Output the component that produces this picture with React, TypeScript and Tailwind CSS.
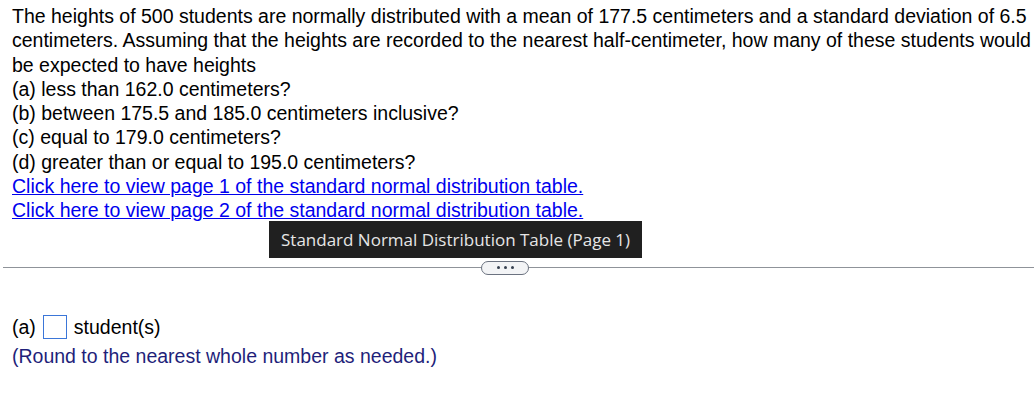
import React from 'react'

export default function App() {
  return (
    <div className="relative w-[1034px] h-[406px] bg-white overflow-hidden" style={{ fontFamily: '"Liberation Sans", Arial, sans-serif' }}>
      {/* question text */}
      <div className="pl-[12px] pt-[4px] text-[19.5px] leading-[24.3px] text-black">
        <p>
          The heights of 500 students are normally distributed with a mean of 177.5 centimeters and a standard deviation of 6.5
          centimeters. Assuming that the heights are recorded to the nearest half-centimeter, how many of these students would
          be expected to have heights
        </p>
        <p>(a) less than 162.0 centimeters?</p>
        <p>(b) between 175.5 and 185.0 centimeters inclusive?</p>
        <p>(c) equal to 179.0 centimeters?</p>
        <p>(d) greater than or equal to 195.0 centimeters?</p>
        <p><a href="#" className="text-[#0000ee] underline">Click here to view page 1 of the standard normal distribution table.</a></p>
        <p><a href="#" className="text-[#0000ee] underline">Click here to view page 2 of the standard normal distribution table.</a></p>
      </div>

      {/* divider with expand pill */}
      <div className="relative mt-[38px] ml-[3px] h-[14px] flex items-center">
        <div className="w-full h-px bg-[#8f9399]" />
        <div className="absolute left-[478px] top-0 w-[48px] h-[14px] rounded-full border border-[#6b7280] bg-[#f3f4f6] flex items-center justify-center gap-[4px]">
          <span className="w-[3px] h-[3px] rounded-full bg-[#374151]" />
          <span className="w-[3px] h-[3px] rounded-full bg-[#374151]" />
          <span className="w-[3px] h-[3px] rounded-full bg-[#374151]" />
        </div>
      </div>

      {/* answer */}
      <div className="pl-[12px] mt-[40px] text-[19.5px] leading-[24px]">
        <div className="flex items-center gap-[7px] text-black">
          <span>(a)</span>
          <span className="w-[24px] h-[24px] border border-[#3b76d8] bg-white" />
          <span>student(s)</span>
        </div>
        <p className="mt-[5px] text-[#1f1f7a]">(Round to the nearest whole number as needed.)</p>
      </div>

      {/* tooltip */}
      <div
        className="absolute left-[269px] top-[221px] w-[373px] h-[37px] bg-[#202020] text-[#e6e6e6] text-[17px] flex items-center pl-[12px]"
        style={{ fontFamily: '"Open Sans", "Noto Sans", sans-serif' }}
      >
        Standard Normal Distribution Table (Page 1)
      </div>
    </div>
  )
}
